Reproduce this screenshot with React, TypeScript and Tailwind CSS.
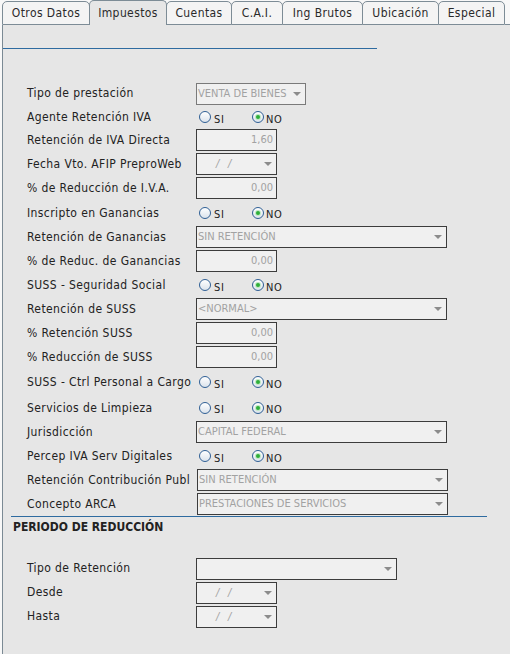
import React from "react";

const FONT = "font-['DejaVu_Sans_Condensed','DejaVu_Sans',sans-serif]";

type Tab = { label: string; w: string; active?: boolean };

const tabs: Tab[] = [
  { label: "Otros Datos", w: "w-[88px]" },
  { label: "Impuestos", w: "w-[78px]", active: true },
  { label: "Cuentas", w: "w-[66px]" },
  { label: "C.A.I.", w: "w-[52px]" },
  { label: "Ing Brutos", w: "w-[81px]" },
  { label: "Ubicación", w: "w-[77px]" },
  { label: "Especial", w: "w-[67px]" },
];

function Label({ children, up }: { children: React.ReactNode; up?: boolean }) {
  return (
    <div
      className={`w-[169px] shrink-0 whitespace-nowrap text-[12px] leading-[14px] tracking-[0.4px] text-[#222] ${
        up ? "pb-[3px]" : ""
      }`}
    >
      {children}
    </div>
  );
}

function Arrow() {
  return (
    <div className="absolute right-[4px] top-[8px] h-0 w-0 border-l-[4px] border-r-[4px] border-t-[4px] border-l-transparent border-r-transparent border-t-[#8c8c8c]" />
  );
}

function Select({
  w,
  text,
  light,
}: {
  w: string;
  text?: string;
  light?: boolean;
}) {
  return (
    <div
      className={`relative h-[22px] ${w} border ${
        light ? "border-[#7a7a7a]" : "border-[#3c3c3c]"
      } bg-[#f0f0f0]`}
    >
      {text && (
        <div className="pl-[1px] pt-[3px] text-[11px] leading-[14px] text-[#a2a2a2] whitespace-nowrap">
          {text}
        </div>
      )}
      <Arrow />
    </div>
  );
}

function DateSel() {
  return (
    <div className="relative h-[22px] w-[81px] border border-[#3c3c3c] bg-[#f0f0f0]">
      <div className="flex pl-[19px] pt-[3px] text-[11px] leading-[14px] text-[#a2a2a2] italic">
        <span className="w-[12px]">/</span>
        <span>/</span>
      </div>
      <Arrow />
    </div>
  );
}

function NumBox({ value }: { value: string }) {
  return (
    <div className="h-[22px] w-[81px] border border-[#3c3c3c] bg-[#f0f0f0] pr-[3px] pt-[3px] text-right text-[11px] leading-[14px] text-[#a2a2a2]">
      {value}
    </div>
  );
}

function Circle({ checked }: { checked?: boolean }) {
  return (
    <div className="flex h-[12px] w-[12px] shrink-0 items-center justify-center rounded-full border border-[#2f5f95] bg-gradient-to-b from-[#ffffff] to-[#dbe3ec]">
      {checked && (
        <div className="h-[4px] w-[4px] rounded-full bg-[#2fae3a] shadow-[0_0_0_1px_#bfe8c2]" />
      )}
    </div>
  );
}

function Radios() {
  return (
    <div className="flex items-center pl-[3px]">
      <div className="flex w-[53px] items-center">
        <Circle />
        <span className="ml-[3px] pt-[5px] text-[11px] leading-[14px] tracking-[0.6px] text-[#222]">SI</span>
      </div>
      <div className="flex items-center">
        <Circle checked />
        <span className="ml-[2px] pt-[5px] text-[11px] leading-[14px] tracking-[0.6px] text-[#222]">NO</span>
      </div>
    </div>
  );
}

function Row({
  h,
  label,
  up,
  children,
}: {
  h: string;
  label: string;
  up?: boolean;
  children: React.ReactNode;
}) {
  return (
    <div className={`flex ${h} items-center`}>
      <Label up={up}>{label}</Label>
      {children}
    </div>
  );
}

export default function App() {
  return (
    <div className={`${FONT} flex h-[654px] w-[510px] flex-col overflow-hidden bg-[#f8f8f8]`}>
      {/* Tabs */}
      <div className="flex h-[25px] shrink-0 items-end pl-[2px]">
        {tabs.map((t, i) => (
          <div
            key={t.label}
            className={`${t.w} ${i > 0 ? "-ml-px" : ""} ${
              t.active
                ? "relative z-10 h-[25px] border border-b-0 bg-[#e6e6e6] pt-[5px]"
                : "h-[24px] border bg-[#f4f4f4] pt-[4px]"
            } flex shrink-0 justify-center rounded-t-[5px] border-[#7d8c96] text-[12px] leading-[14px] tracking-[0.4px] text-[#2a2a2a]`}
          >
            {t.label}
          </div>
        ))}
        <div className="h-[25px] flex-1 border-b border-[#7d8c96]" />
      </div>

      {/* Panel */}
      <div className="ml-[2px] flex flex-1 flex-col border-l border-[#7b8a94] bg-[#e6e6e6]">
        <div className="mt-[23px] h-px w-[374px] bg-[#2e6ba0]" />

        <div className="mt-[33px] flex flex-col pl-[24px]">
          <Row h="h-[24px]" label="Tipo de prestación" up>
            <Select w="w-[110px]" text="VENTA DE BIENES" light />
          </Row>
          <Row h="h-[22px]" label="Agente Retención IVA">
            <Radios />
          </Row>
          <Row h="h-[24px]" label="Retención de IVA Directa">
            <NumBox value="1,60" />
          </Row>
          <Row h="h-[24px]" label="Fecha Vto. AFIP PreproWeb">
            <DateSel />
          </Row>
          <Row h="h-[24px]" label="% de Reducción de I.V.A.">
            <NumBox value="0,00" />
          </Row>
          <Row h="h-[25px]" label="Inscripto en Ganancias">
            <Radios />
          </Row>
          <Row h="h-[24px]" label="Retención de Ganancias">
            <Select w="w-[251px]" text="SIN RETENCIÓN" />
          </Row>
          <Row h="h-[24px]" label="% de Reduc. de Ganancias">
            <NumBox value="0,00" />
          </Row>
          <Row h="h-[24px]" label="SUSS - Seguridad Social">
            <Radios />
          </Row>
          <Row h="h-[24px]" label="Retención de SUSS">
            <Select w="w-[251px]" text="<NORMAL>" />
          </Row>
          <Row h="h-[24px]" label="% Retención SUSS">
            <NumBox value="0,00" />
          </Row>
          <Row h="h-[24px]" label="% Reducción de SUSS">
            <NumBox value="0,00" />
          </Row>
          <Row h="h-[26px]" label="SUSS - Ctrl Personal a Cargo">
            <Radios />
          </Row>
          <Row h="h-[25px]" label="Servicios de Limpieza">
            <Radios />
          </Row>
          <Row h="h-[24px]" label="Jurisdicción">
            <Select w="w-[251px]" text="CAPITAL FEDERAL" />
          </Row>
          <Row h="h-[24px]" label="Percep IVA Serv Digitales">
            <Radios />
          </Row>
          <Row h="h-[24px]" label="Retención Contribución Publ">
            <div className="pl-px">
              <Select w="w-[251px]" text="SIN RETENCIÓN" />
            </div>
          </Row>
          <Row h="h-[24px]" label="Concepto ARCA">
            <div className="pl-px">
              <Select w="w-[251px]" text="PRESTACIONES DE SERVICIOS" />
            </div>
          </Row>
        </div>

        <div className="ml-[8px] h-px w-[476px] bg-[#2e6ba0]" />
        <div className="ml-[10px] mt-[3px] text-[12px] font-bold leading-[14px] text-[#222]">
          PERIODO DE REDUCCIÓN
        </div>

        <div className="mt-[23px] flex flex-col pl-[24px]">
          <Row h="h-[24px]" label="Tipo de Retención" up>
            <Select w="w-[201px]" />
          </Row>
          <Row h="h-[24px]" label="Desde" up>
            <DateSel />
          </Row>
          <Row h="h-[24px]" label="Hasta" up>
            <DateSel />
          </Row>
        </div>
      </div>
    </div>
  );
}
